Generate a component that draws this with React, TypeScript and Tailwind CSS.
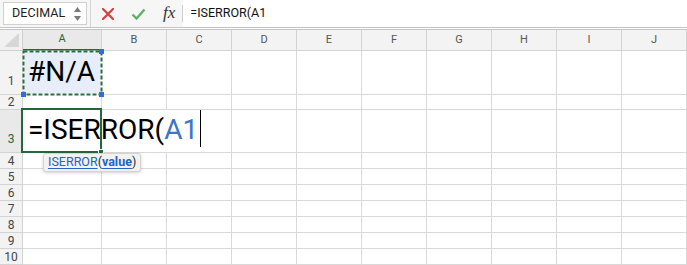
import React from "react"

const COLS = ["A", "B", "C", "D", "E", "F", "G", "H", "I", "J"]
const ROWS = [1, 2, 3, 4, 5, 6, 7, 8, 9, 10]

function Toolbar() {
  return (
    <div className="h-[28px] flex items-center bg-[#f6f6f6] border-b border-[#c4c4c4]">
      {/* name box */}
      <div className="ml-[3px] h-[23px] w-[84px] bg-white border border-[#cfcfcf] flex items-center justify-between pl-[8px] pr-[4px]">
        <span className="text-[12.5px] text-[#222] tracking-[0.1px]">DECIMAL</span>
        <svg width="9" height="16" viewBox="0 0 9 16">
          <path d="M4.5 1 L8 6 L1 6 Z" fill="#7a7a7a" />
          <path d="M4.5 15 L8 10 L1 10 Z" fill="#7a7a7a" />
        </svg>
      </div>
      <div className="w-px h-[27px] bg-[#d6d6d6] ml-[3px]" />
      <div className="flex items-center gap-[17px] ml-[11px]">
        <svg width="12" height="12" viewBox="0 0 12 12">
          <path d="M1 1 L11 11 M11 1 L1 11" stroke="#d9413b" strokeWidth="2.2" strokeLinecap="square" />
        </svg>
        <svg width="15" height="12" viewBox="0 0 15 12">
          <path d="M1.5 6.5 L5.5 10.5 L13.5 1.5" stroke="#5bb55f" strokeWidth="2.4" fill="none" />
        </svg>
        <span className="font-[family-name:'Liberation_Serif',serif] italic text-[17px] text-[#333] leading-none -mt-[2px]">
          fx
        </span>
      </div>
      <div className="w-px h-[17px] bg-[#cdcdcd] ml-[7px]" />
      <div className="flex-1 h-full bg-white flex items-center pl-[7px] text-[12.5px] text-[#111]">
        =ISERROR(A1
      </div>
    </div>
  )
}

function CornerCell() {
  return (
    <div className="bg-[#f1f1f1] border-r border-b border-[#cfcfcf] flex items-end justify-end pr-[3px] pb-[3px]">
      <svg width="15" height="14" viewBox="0 0 15 14">
        <path d="M15 0 L15 14 L0 14 Z" fill="#d7d7d7" />
      </svg>
    </div>
  )
}

function A1Cell() {
  return (
    <div className="relative bg-[#e8eef9] border-r border-b border-[#d9d9d9] flex items-end pl-[5px] pb-[8px]">
      <span className="text-[28px] leading-[28px] text-black">#N/A</span>
      <svg className="absolute -left-px -top-px" width="81" height="46" viewBox="0 0 81 46">
        <rect x="1.5" y="1.5" width="78" height="43" fill="none" stroke="#ffffff" strokeWidth="2" />
        <rect x="1.5" y="1.5" width="78" height="43" fill="none" stroke="#2d6b3d" strokeWidth="2" strokeDasharray="4 2" />
      </svg>
      <div className="absolute -right-[3px] -top-[2px] w-[5px] h-[5px] bg-[#2f6fd3]" />
      <div className="absolute -left-[2px] -bottom-[3px] w-[5px] h-[5px] bg-[#2f6fd3]" />
      <div className="absolute -right-[3px] -bottom-[3px] w-[5px] h-[5px] bg-[#2f6fd3]" />
    </div>
  )
}

function A3Cell() {
  return (
    <div className="relative z-10 border-r border-b border-[#d9d9d9] flex items-end pl-[5px] pb-[8px]">
      <div className="absolute -left-[2px] -top-[2px] -right-px -bottom-px border-2 border-[#23683a]" />
      <span className="relative text-[28px] leading-[28px] text-black whitespace-nowrap flex items-end">
        =ISERROR(<span className="text-[#3a76c6]">A1</span>
        <span className="inline-block w-px h-[37px] bg-black ml-[2px] -mb-[3px]" />
      </span>
      <div className="absolute -right-[3px] -bottom-[3px] w-[6px] h-[6px] bg-[#23683a] border border-white" />
    </div>
  )
}

function Tooltip() {
  return (
    <div className="absolute left-[43px] top-[153px] z-20 h-[19px] px-[4px] flex items-center rounded-[3px] bg-[#f2f2f2] border border-[#d3d3d3] shadow-[0_1px_3px_rgba(0,0,0,0.18)] text-[12.5px] text-[#2a2a2a]">
      <span className="text-[#2463c7] underline underline-offset-2">ISERROR</span>
      <span>(</span>
      <span className="text-[#2463c7] font-bold underline underline-offset-2">value</span>
      <span>)</span>
    </div>
  )
}

export default function App() {
  return (
    <div className="relative w-[687px] h-[265px] overflow-hidden bg-white font-[family-name:Roboto,sans-serif]">
      <Toolbar />
      <div className="h-px bg-white" />
      <div className="grid grid-cols-[23px_79px_repeat(9,65px)] grid-rows-[21px_44px_15px_43px_repeat(7,16px)] border-t border-[#c4c4c4]">
        <CornerCell />
        {COLS.map((c) => (
          <div
            key={c}
            className={
              c === "A"
                ? "bg-[#e9e9e9] border-r border-b-2 border-r-[#d3d3d3] border-b-[#23683a] flex items-center justify-center text-[11px] text-[#23683a]"
                : "bg-[#f3f3f3] border-r border-b border-[#d3d3d3] flex items-center justify-center text-[11px] text-[#555]"
            }
          >
            {c}
          </div>
        ))}
        {ROWS.map((r) => (
          <React.Fragment key={r}>
            <div
              className={
                r === 3
                  ? "bg-[#e9e9e9] border-r border-b border-[#d3d3d3] flex items-end justify-center pb-[6px] text-[12px] leading-[14px] text-[#23683a]"
                  : r === 1
                    ? "bg-[#f3f3f3] border-r border-b border-[#d3d3d3] flex items-end justify-center pb-[6px] text-[12px] leading-[14px] text-[#444]"
                    : "bg-[#f3f3f3] border-r border-b border-[#d3d3d3] flex items-center justify-center text-[12px] leading-[14px] text-[#444]"
              }
            >
              {r}
            </div>
            {COLS.map((c) => {
              if (r === 1 && c === "A") return <A1Cell key={c} />
              if (r === 3 && c === "A") return <A3Cell key={c} />
              if (r === 3 && c === "B")
                return <div key={c} className="border-b border-[#d9d9d9]" />
              return <div key={c} className="border-r border-b border-[#d9d9d9]" />
            })}
          </React.Fragment>
        ))}
      </div>
      <Tooltip />
    </div>
  )
}
